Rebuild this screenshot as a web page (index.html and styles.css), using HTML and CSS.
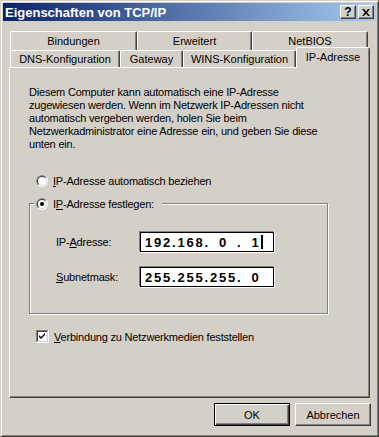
FILE: index.html
```html
<!DOCTYPE html>
<html lang="de">
<head>
<meta charset="utf-8">
<title>Eigenschaften von TCP/IP</title>
<link rel="stylesheet" href="styles.css">
</head>
<body>
<div class="window">
  <div class="titlebar">
    <span class="title">Eigenschaften von TCP/IP</span>
    <div class="tbtns">
      <span class="tbtn help">?</span>
      <span class="tbtn close"><svg width="8" height="7" viewBox="0 0 8 7"><path d="M0 0h2l2 2.5L6 0h2L5 3.5 8 7H6L4 4.5 2 7H0l3-3.5z" fill="#000"/></svg></span>
    </div>
  </div>

  <div class="tabs">
    <div class="tabrow back">
      <div class="tab t-bind">Bindungen</div>
      <div class="tab t-erw">Erweitert</div>
      <div class="tab t-net">NetBIOS</div>
    </div>
    <div class="tabrow front">
      <div class="tab t-dns">DNS-Konfiguration</div>
      <div class="tab t-gw">Gateway</div>
      <div class="tab t-wins">WINS-Konfiguration</div>
      <div class="tab t-ip selected">IP-Adresse</div>
    </div>
  </div>

  <div class="panel">
    <p class="intro">Diesem Computer kann automatisch eine IP-Adresse<br>zugewiesen werden. Wenn im Netzwerk IP-Adressen nicht<br>automatisch vergeben werden, holen Sie beim<br>Netzwerkadministrator eine Adresse ein, und geben Sie diese<br>unten ein.</p>

    <div class="option first">
      <svg class="radio" width="12" height="12" viewBox="0 0 12 12">
        <defs><clipPath id="tl1"><polygon points="0,0 12,0 0,12"/></clipPath></defs>
        <circle cx="6" cy="6" r="6" fill="#fff"/>
        <circle cx="6" cy="6" r="6" fill="#808080" clip-path="url(#tl1)"/>
        <circle cx="6" cy="6" r="5" fill="#d4d0c8"/>
        <circle cx="6" cy="6" r="5" fill="#404040" clip-path="url(#tl1)"/>
        <circle cx="6" cy="6" r="4" fill="#fff"/>
      </svg>
      <span><u>I</u>P-Adresse automatisch beziehen</span>
    </div>

    <div class="group">
      <div class="legend">
        <svg class="radio" width="12" height="12" viewBox="0 0 12 12">
          <defs><clipPath id="tl2"><polygon points="0,0 12,0 0,12"/></clipPath></defs>
          <circle cx="6" cy="6" r="6" fill="#fff"/>
          <circle cx="6" cy="6" r="6" fill="#808080" clip-path="url(#tl2)"/>
          <circle cx="6" cy="6" r="5" fill="#d4d0c8"/>
          <circle cx="6" cy="6" r="5" fill="#404040" clip-path="url(#tl2)"/>
          <circle cx="6" cy="6" r="4" fill="#fff"/>
          <circle cx="6" cy="6" r="2" fill="#000"/>
        </svg>
        <span>I<u>P</u>-Adresse festlegen:</span>
      </div>
      <div class="field-row first-field">
        <span class="flabel">IP-<u>A</u>dresse:</span>
        <div class="ipbox">192.168.<span class="sp"> </span>0<span class="sp"> </span>.<span class="sp"> </span>1<span class="caret"></span></div>
      </div>
      <div class="field-row second-field">
        <span class="flabel"><u>S</u>ubnetmask:</span>
        <div class="ipbox">255.255.255.<span class="sp"> </span>0</div>
      </div>
    </div>

    <div class="option check-row">
      <svg class="checkbox" width="13" height="13" viewBox="0 0 13 13">
        <rect x="0" y="0" width="13" height="13" fill="#fff"/>
        <path d="M0 0h12v1H1v11H0z" fill="#808080"/>
        <path d="M1 1h10v1H2v9H1z" fill="#404040"/>
        <path d="M11 1h1v11H1v-1h10z" fill="#d4d0c8"/>
        <path d="M3 5l2 2 4-4v2l-4 4-2-2z" fill="#000"/>
      </svg>
      <span><u>V</u>erbindung zu Netzwerkmedien feststellen</span>
    </div>
  </div>

  <div class="buttons">
    <div class="btn default">OK</div>
    <div class="btn">Abbrechen</div>
  </div>
</div>
</body>
</html>
```

FILE: styles.css
```css
html, body {
  margin: 0;
  padding: 0;
  background: #d4d0c8;
}

body {
  font-family: "Liberation Sans", Arial, sans-serif;
  font-size: 11px;
  color: #000;
}

.window {
  width: 379px;
  height: 437px;
  box-sizing: border-box;
  background: #d4d0c8;
  border: 1px solid;
  border-color: #d4d0c8 #404040 #404040 #d4d0c8;
  box-shadow: inset 1px 1px #fff, inset -1px -1px #808080;
  padding: 2px;
  display: flex;
  flex-direction: column;
}

.titlebar {
  height: 18px;
  flex: none;
  background: linear-gradient(to right, #0a246a, #a6caf0);
  display: flex;
  align-items: center;
  justify-content: space-between;
  padding: 0 2px 0 2px;
  color: #fff;
  font-weight: bold;
  font-size: 13px;
}

.tbtns {
  display: flex;
  gap: 2px;
}

.tbtn {
  width: 16px;
  height: 14px;
  box-sizing: border-box;
  background: #d4d0c8;
  border: 1px solid;
  border-color: #fff #404040 #404040 #fff;
  box-shadow: inset -1px -1px #808080;
  display: flex;
  align-items: center;
  justify-content: center;
  color: #000;
  font-size: 12px;
  font-weight: bold;
  line-height: 1;
}

.tabs {
  margin: 10px 0 0 7px;
  flex: none;
}

.tabrow {
  display: flex;
}

.tab {
  box-sizing: border-box;
  border-top: 1px solid #fff;
  border-left: 1px solid #fff;
  border-right: 1px solid #404040;
  box-shadow: inset -1px 0 #808080;
  border-radius: 2px 2px 0 0;
  background: #d4d0c8;
  text-align: center;
  display: flex;
  align-items: center;
  justify-content: center;
}

.back .tab {
  height: 19px;
}

.front .tab {
  height: 17px;
}

.t-bind { width: 127px; }
.t-erw { width: 115px; }
.t-net { width: 116px; }

.t-dns { width: 110px; }
.t-gw { width: 63px; }
.t-wins { width: 113px; }

.front .tab.selected {
  width: 74px;
  height: 21px;
  margin-top: -3px;
  margin-bottom: -1px;
  padding-bottom: 2px;
  position: relative;
  z-index: 1;
}

.panel {
  flex: none;
  margin-left: 6px;
  width: 361px;
  height: 331px;
  box-sizing: border-box;
  border: 1px solid;
  border-color: #fff #404040 #404040 #fff;
  box-shadow: inset -1px -1px #808080;
  padding: 18px 0 0 19px;
  letter-spacing: -0.2px;
}

.intro {
  margin: 0;
  line-height: 13px;
}

.option {
  display: flex;
  align-items: center;
  gap: 5px;
  height: 13px;
  margin-left: 7px;
}

.option.first {
  margin-top: 23px;
}

.radio, .checkbox {
  flex: none;
  display: block;
}

.group {
  margin-top: 16px;
  width: 299px;
  box-sizing: border-box;
  border: 1px solid #808080;
  box-shadow: 1px 1px #fff, inset 1px 1px #fff;
  padding-bottom: 26px;
}

.legend {
  margin: -7px 0 0 4px;
  padding: 0 8px 0 2px;
  height: 13px;
  width: fit-content;
  background: #d4d0c8;
  display: flex;
  align-items: center;
  gap: 5px;
}

.field-row {
  display: flex;
  align-items: center;
  margin-left: 26px;
}

.first-field {
  margin-top: 22px;
}

.second-field {
  margin-top: 15px;
}

.flabel {
  width: 84px;
  flex: none;
}

.ipbox {
  width: 134px;
  height: 20px;
  box-sizing: border-box;
  background: #fff;
  border: 1px solid #000;
  box-shadow: -1px -1px #808080, 1px 1px #fff;
  font-family: "Liberation Sans", Arial, sans-serif;
  font-weight: bold;
  font-size: 13px;
  letter-spacing: 1.8px;
  white-space: pre;
  padding-left: 4px;
  display: flex;
  align-items: center;
}

.sp {
  margin-right: 3.6px;
}

.caret {
  display: inline-block;
  width: 2px;
  height: 14px;
  background: #000;
}

.check-row {
  margin-top: 16px;
}

.buttons {
  flex: none;
  display: flex;
  justify-content: flex-end;
  gap: 5px;
  margin-top: 5px;
  padding-right: 5px;
}

.btn {
  width: 76px;
  height: 23px;
  box-sizing: border-box;
  border: 1px solid;
  border-color: #fff #404040 #404040 #fff;
  box-shadow: inset -1px -1px #808080;
  display: flex;
  align-items: center;
  justify-content: center;
}

.btn.default {
  border: 1px solid #000;
  box-shadow: inset 1px 1px #fff, inset -1px -1px #404040, inset -2px -2px #808080;
}
```
